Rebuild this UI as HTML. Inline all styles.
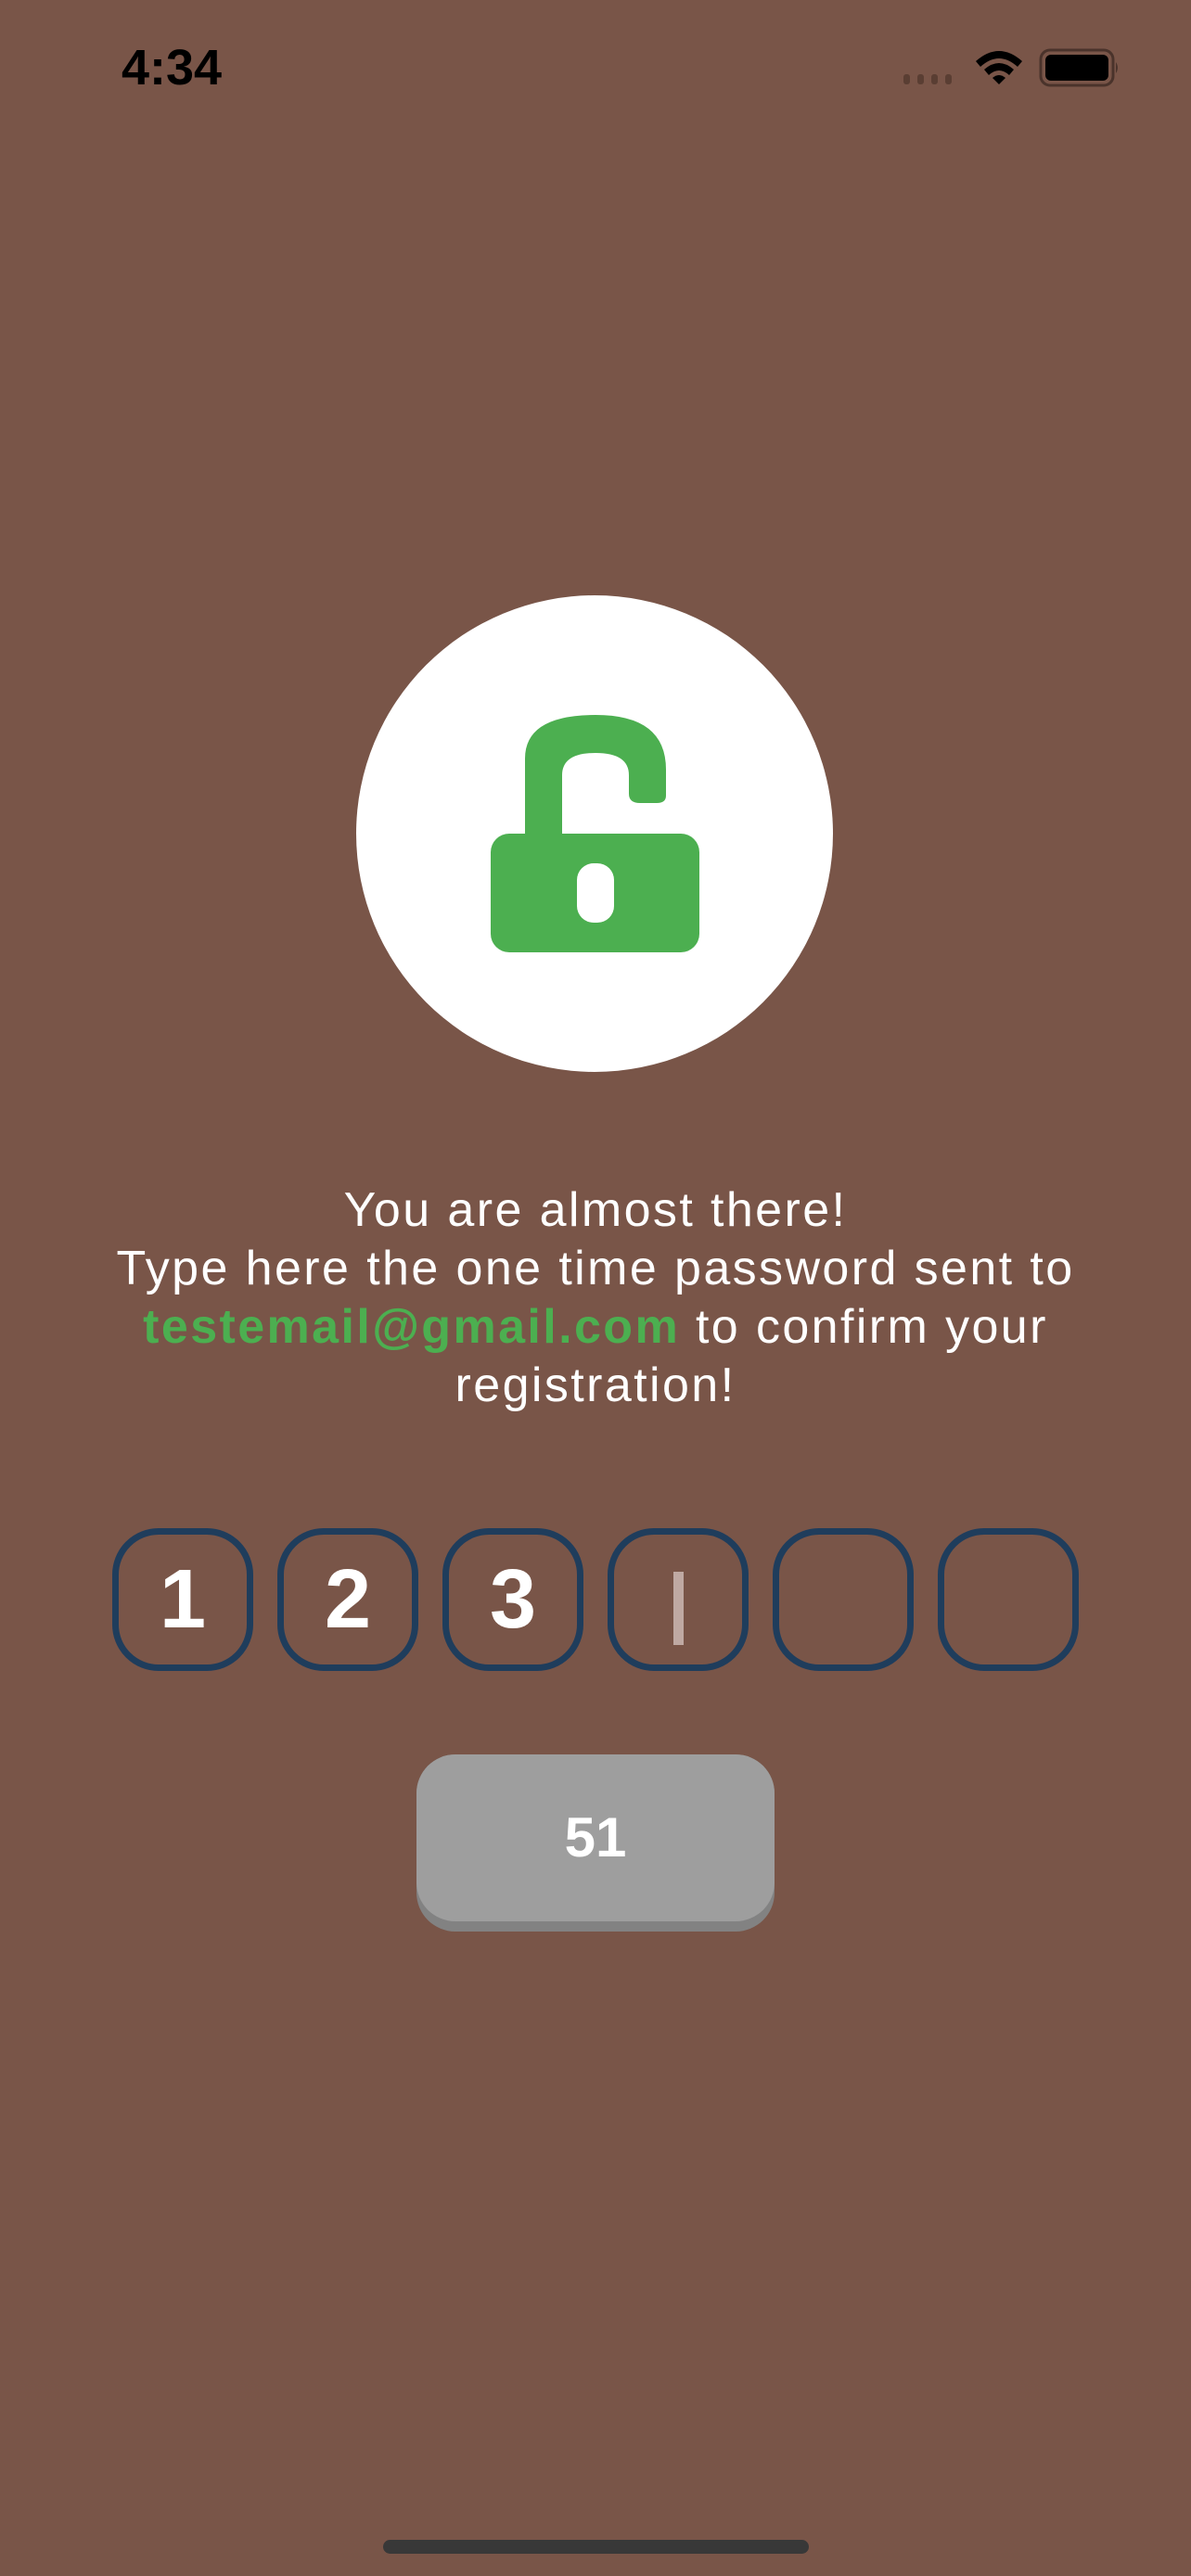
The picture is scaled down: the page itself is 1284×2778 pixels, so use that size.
<!DOCTYPE html>
<html><head><meta charset="utf-8">
<style>
html,body{margin:0;padding:0;}
body{width:1284px;height:2778px;background:#795548;position:relative;overflow:hidden;font-family:"Liberation Sans",sans-serif;}
.abs{position:absolute;}
.time{left:131px;top:42px;font-size:54px;font-weight:bold;color:#000;letter-spacing:0px;}
.circle{left:384px;top:642px;width:514px;height:514px;border-radius:50%;background:#fff;}
.txt{left:0;width:1284px;top:1274px;text-align:center;color:#fff;font-size:52px;line-height:63px;letter-spacing:2.4px;}
.txt b{color:#4caf50;}
.box{top:1648px;width:138px;height:140px;border:7px solid #1f3d5c;border-radius:50px;color:#fff;font-weight:bold;font-size:90px;text-align:center;line-height:140px;}
.cur{left:726px;top:1695px;width:11px;height:79px;background:#bfa9a3;}
.btnsh{left:449px;top:1892px;width:386px;height:191px;border-radius:42px;background:#828282;}
.btn{left:449px;top:1892px;width:386px;height:180px;border-radius:42px;background:#9e9e9e;color:#fff;font-weight:bold;font-size:60px;text-align:center;line-height:180px;}
.home{left:413px;top:2739px;width:459px;height:15px;border-radius:8px;background:#383838;}
</style></head><body>
<div class="abs time">4:34</div>
<svg class="abs" style="left:970px;top:50px" width="240" height="46" viewBox="0 0 240 46">
  <rect x="4" y="30" width="7" height="11" rx="3" fill="#5a3e33"/>
  <rect x="19" y="30" width="7" height="11" rx="3" fill="#5a3e33"/>
  <rect x="34" y="30" width="7" height="11" rx="3" fill="#5a3e33"/>
  <rect x="49" y="30" width="7" height="11" rx="3" fill="#5a3e33"/>
  <path d="M82 16 Q107 -6 132 16 L127 22 Q107 4 87 22 Z" fill="#000"/>
  <path d="M91 25 Q107 11 123 25 L118 31 Q107 21 96 31 Z" fill="#000"/>
  <path d="M100 34 Q107 28 114 34 L107 41 Z" fill="#000"/>
  <rect x="152" y="4" width="78" height="38" rx="10" fill="none" stroke="#4a332b" stroke-width="3"/>
  <rect x="157" y="9" width="68" height="28" rx="6" fill="#000"/>
  <path d="M233 17 Q237 23 233 29 Z" fill="#4a332b"/>
</svg>
<div class="abs circle"></div>
<svg class="abs" style="left:0;top:0" width="1284" height="1100">
  <path d="M566 899 V818 Q566 771 642 771 Q718 771 718 830 V858 Q718 866 708 866 H690 Q678 866 678 856 V836 Q678 812 642 812 Q606 812 606 836 V899 Z" fill="#4caf50"/>
  <rect x="529" y="899" width="225" height="128" rx="20" fill="#4caf50"/>
  <rect x="622" y="931" width="40" height="64" rx="18" fill="#fff"/>
</svg>
<div class="abs txt">You are almost there!<br>Type here the one time password sent to<br><b>testemail@gmail.com</b> to confirm your<br>registration!</div>
<div class="abs box" style="left:121px">1</div>
<div class="abs box" style="left:299px">2</div>
<div class="abs box" style="left:477px">3</div>
<div class="abs box" style="left:655px"></div>
<div class="abs box" style="left:833px"></div>
<div class="abs box" style="left:1011px"></div>
<div class="abs cur"></div>
<div class="abs btnsh"></div>
<div class="abs btn">51</div>
<div class="abs home"></div>
</body></html>
